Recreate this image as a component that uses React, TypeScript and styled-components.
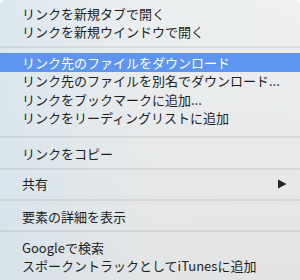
import styled, { createGlobalStyle } from "styled-components";

const GlobalStyle = createGlobalStyle`
  html, body {
    margin: 0;
    padding: 0;
    background: #ffffff;
    overflow: hidden;
  }
`;

const Menu = styled.div`
  width: 300px;
  height: 280px;
  box-sizing: border-box;
  padding-top: 4px;
  display: flex;
  flex-direction: column;
  border-radius: 5px 5px 0 0;
  overflow: hidden;
  background:
    linear-gradient(90deg, rgba(205, 226, 238, 0.55) 0%, rgba(225, 232, 236, 0.2) 45%, rgba(236, 236, 236, 0) 100%),
    linear-gradient(180deg, #eef0f1 0%, #e8e9ea 55%, #e2e3e4 100%);
  font-family: "Noto Sans CJK JP", "Noto Sans", sans-serif;
  font-size: 13px;
  color: #1e1e1e;
`;

const Item = styled.div<{ $active?: boolean }>`
  height: 18.5px;
  flex-shrink: 0;
  display: flex;
  align-items: center;
  justify-content: space-between;
  padding: 0 13px 0 22px;
  white-space: nowrap;
  background: ${(p) => (p.$active ? "#5d95f0" : "transparent")};
  color: ${(p) => (p.$active ? "#ffffff" : "inherit")};
`;

const Separator = styled.div<{ $h: number; $line: number }>`
  height: ${(p) => p.$h}px;
  flex-shrink: 0;
  position: relative;

  &::after {
    content: "";
    position: absolute;
    left: 0;
    right: 0;
    top: ${(p) => p.$line - 1}px;
    height: 2px;
    background: rgba(0, 0, 0, 0.07);
  }
`;

const Arrow = () => (
  <svg width="10" height="10" viewBox="0 0 10 10">
    <polygon points="1,0.5 9.5,5 1,9.5" fill="#222" />
  </svg>
);

const App = () => (
  <>
    <GlobalStyle />
    <Menu>
      <Item>リンクを新規タブで開く</Item>
      <Item>リンクを新規ウインドウで開く</Item>
      <Separator $h={12} $line={6} />
      <Item $active>リンク先のファイルをダウンロード</Item>
      <Item>リンク先のファイルを別名でダウンロード...</Item>
      <Item>リンクをブックマークに追加...</Item>
      <Item>リンクをリーディングリストに追加</Item>
      <Separator $h={17} $line={10} />
      <Item>リンクをコピー</Item>
      <Separator $h={12} $line={6.5} />
      <Item>
        共有
        <Arrow />
      </Item>
      <Separator $h={14} $line={7} />
      <Item>要素の詳細を表示</Item>
      <Separator $h={12.5} $line={5.5} />
      <Item>Googleで検索</Item>
      <Item>スポークントラックとしてiTunesに追加</Item>
    </Menu>
  </>
);

export default App;
